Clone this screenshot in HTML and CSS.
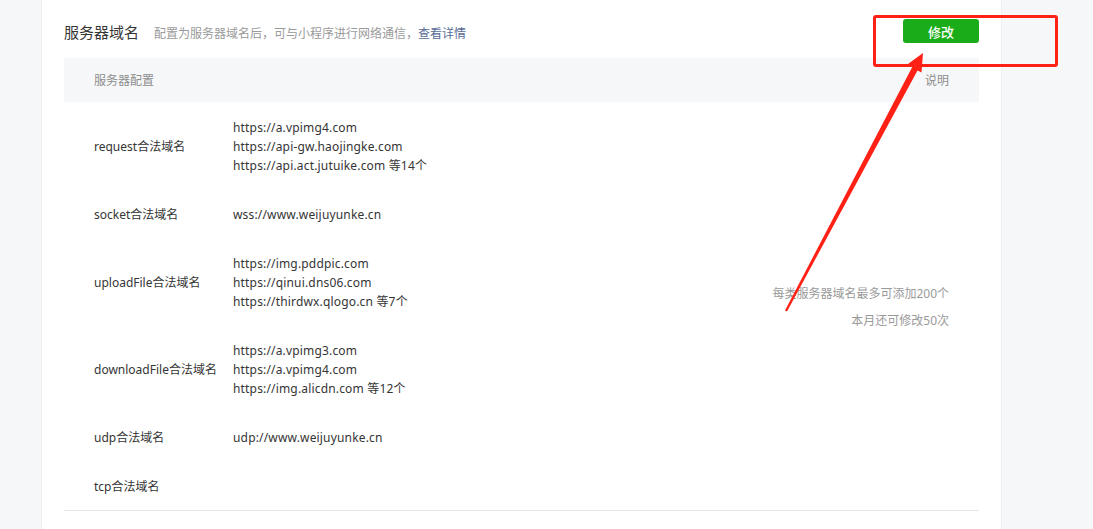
FILE: index.html
```html
<!DOCTYPE html>
<html lang="zh-CN">
<head>
  <meta charset="UTF-8" />
  <title>服务器域名</title>
  <link rel="stylesheet" href="styles.css">
</head>
<body>
  <div class="page">
    <div class="card">

      <!-- En-tête de section -->
      <div class="section-head">
        <div class="section-title">
          <h2>服务器域名</h2>
          <span class="section-desc">配置为服务器域名后，可与小程序进行网络通信，<a href="#">查看详情</a></span>
        </div>
        <button class="btn-edit">修改</button>
      </div>

      <!-- Tableau des domaines -->
      <table class="domain-table">
        <thead>
          <tr>
            <th colspan="2">服务器配置</th>
            <th class="col-note">说明</th>
          </tr>
        </thead>
        <tbody>
          <tr>
            <td class="col-label">request合法域名</td>
            <td class="col-value">https://a.vpimg4.com<br>https://api-gw.haojingke.com<br>https://api.act.jutuike.com 等14个</td>
            <td class="col-note" rowspan="6">
              <p>每类服务器域名最多可添加200个</p>
              <p>本月还可修改50次</p>
            </td>
          </tr>
          <tr>
            <td class="col-label">socket合法域名</td>
            <td class="col-value">wss://www.weijuyunke.cn</td>
          </tr>
          <tr>
            <td class="col-label">uploadFile合法域名</td>
            <td class="col-value">https://img.pddpic.com<br>https://qinui.dns06.com<br>https://thirdwx.qlogo.cn 等7个</td>
          </tr>
          <tr>
            <td class="col-label">downloadFile合法域名</td>
            <td class="col-value">https://a.vpimg3.com<br>https://a.vpimg4.com<br>https://img.alicdn.com 等12个</td>
          </tr>
          <tr>
            <td class="col-label">udp合法域名</td>
            <td class="col-value">udp://www.weijuyunke.cn</td>
          </tr>
          <tr>
            <td class="col-label">tcp合法域名</td>
            <td class="col-value"></td>
          </tr>
        </tbody>
      </table>
    </div>
  </div>

  <!-- Annotation rouge par-dessus la page -->
  <div class="mark-box"></div>
  <svg class="mark-arrow" width="1093" height="529" viewBox="0 0 1093 529">
    <polygon fill="#ff2116" points="923,53 908,64 912.5,66.5 785,310.5 787,311.5 917.5,70.5 921.5,72.5"/>
  </svg>
</body>
</html>
```

FILE: styles.css
```css
/* Base */
* {
  box-sizing: border-box;
  margin: 0;
  padding: 0;
}
body {
  font-family: "Noto Sans", "Noto Sans CJK SC", sans-serif;
  font-size: 12px;
  color: #353535;
  background: #f6f7f9;
  overflow: hidden;
}
.page {
  padding-left: 41px;
  height: 529px;
}
.card {
  width: 961px;
  height: 100%;
  background: #fff;
  border-left: 1px solid #eef0f3;
  border-right: 1px solid #eef0f3;
  padding: 19px 22px 0 22px;
}

/* En-tête */
.section-head {
  display: flex;
  justify-content: space-between;
  align-items: center;
  height: 24px;
  margin-bottom: 15px;
}
.section-title {
  display: flex;
  align-items: baseline;
}
.section-title h2 {
  font-size: 15px;
  font-weight: normal;
  color: #353535;
}
.section-desc {
  margin-left: 15px;
  font-size: 12px;
  color: #9a9a9a;
}
.section-desc a {
  color: #576b95;
  text-decoration: none;
}
.btn-edit {
  width: 76px;
  height: 24px;
  background: #1aad19;
  color: #fff;
  border: none;
  border-radius: 3px;
  font-family: inherit;
  font-size: 13px;
  font-weight: 500;
  cursor: pointer;
}

/* Tableau */
.domain-table {
  width: 100%;
  border-collapse: collapse;
  border-bottom: 1px solid #e7e7eb;
}
.domain-table th {
  height: 44px;
  background: #f6f7f9;
  font-weight: normal;
  color: #8d8d8d;
  text-align: left;
  padding: 0 30px;
}
.domain-table th.col-note {
  text-align: right;
}
.domain-table td {
  padding: 16px 0 14px;
  line-height: 19px;
  vertical-align: middle;
}
.domain-table td.col-label {
  width: 169px;
  padding-left: 30px;
}
.domain-table td.col-value {
  letter-spacing: 0.17px;
}
.domain-table td.col-note {
  text-align: right;
  padding-right: 30px;
  color: #9a9a9a;
  line-height: 27px;
}

/* Annotation */
.mark-box {
  position: absolute;
  left: 873px;
  top: 15px;
  width: 185px;
  height: 52px;
  border: 3px solid #ff2116;
  border-radius: 3px;
}
.mark-arrow {
  position: absolute;
  left: 0;
  top: 0;
  pointer-events: none;
}
```
